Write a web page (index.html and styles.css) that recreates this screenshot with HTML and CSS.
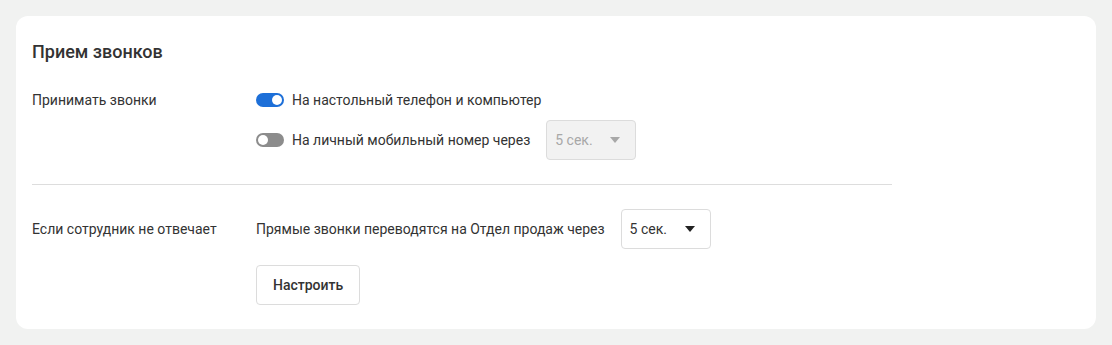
FILE: index.html
```html
<!DOCTYPE html>
<html lang="ru">
<head>
    <meta charset="UTF-8">
    <title>Прием звонков</title>
    <link rel="stylesheet" href="styles.css">
</head>
<body>
    <div class="card">
        <h2 class="card-title">Прием звонков</h2>

        <div class="setting">
            <div class="setting-label">Принимать звонки</div>
            <div class="setting-body">
                <div class="option">
                    <span class="toggle on"></span>
                    <span>На настольный телефон и компьютер</span>
                </div>
                <div class="option">
                    <span class="toggle"></span>
                    <span>На личный мобильный номер через</span>
                    <div class="select disabled">
                        <span>5 сек.</span>
                        <span class="caret"></span>
                    </div>
                </div>
            </div>
        </div>

        <hr class="divider">

        <div class="setting">
            <div class="setting-label row-label">Если сотрудник не отвечает</div>
            <div class="setting-body">
                <div class="option">
                    <span>Прямые звонки переводятся на Отдел продаж через</span>
                    <div class="select">
                        <span>5 сек.</span>
                        <span class="caret"></span>
                    </div>
                </div>
                <div class="actions">
                    <button class="btn">Настроить</button>
                </div>
            </div>
        </div>
    </div>
</body>
</html>
```

FILE: styles.css
```css
:root {
    --bg: #f1f2f1;
    --text: #333333;
    --border: #dcdcdc;
    --blue: #1d6fd8;
}

body {
    margin: 0;
    padding: 16px;
    background: var(--bg);
    font-family: Roboto, 'Liberation Sans', sans-serif;
    font-size: 14px;
    color: var(--text);
}

.card {
    background: #fff;
    border-radius: 12px;
    padding: 24px 16px;
}

.card-title {
    margin: 0 0 24px;
    font-size: 18px;
    line-height: 24px;
    font-weight: 500;
}

.setting {
    display: grid;
    grid-template-columns: 224px 1fr;
}

.setting-label {
    line-height: 24px;
}

.row-label {
    padding-top: 8px;
}

.setting-body {
    display: flex;
    flex-direction: column;
    gap: 8px;
}

.option {
    display: flex;
    align-items: center;
    gap: 8px;
    min-height: 24px;
    line-height: 20px;
}

.toggle {
    width: 28px;
    height: 14px;
    border-radius: 7px;
    background: #8c8c8c;
    position: relative;
    flex: none;
}

.toggle::after {
    content: '';
    position: absolute;
    top: 2px;
    left: 2px;
    width: 10px;
    height: 10px;
    border-radius: 50%;
    background: #fff;
}

.toggle.on {
    background: var(--blue);
}

.toggle.on::after {
    left: 16px;
}

.select {
    display: flex;
    align-items: center;
    justify-content: space-between;
    box-sizing: border-box;
    width: 90px;
    height: 40px;
    padding: 0 15px 0 8px;
    margin-left: 8px;
    border: 1px solid var(--border);
    border-radius: 4px;
    background: #fff;
}

.select.disabled {
    background: #f2f2f2;
    color: #a8a8a8;
}

.caret {
    width: 0;
    height: 0;
    border-left: 5px solid transparent;
    border-right: 5px solid transparent;
    border-top: 6px solid #222;
}

.select.disabled .caret {
    border-top-color: #a8a8a8;
}

.divider {
    width: 860px;
    margin: 24px 0;
    border: 0;
    border-top: 1px solid #dddddd;
}

.actions {
    padding-top: 8px;
}

.btn {
    height: 40px;
    padding: 0 16px;
    border: 1px solid var(--border);
    border-radius: 4px;
    background: #fff;
    font-family: inherit;
    font-size: 14px;
    font-weight: 500;
    color: var(--text);
}
```
